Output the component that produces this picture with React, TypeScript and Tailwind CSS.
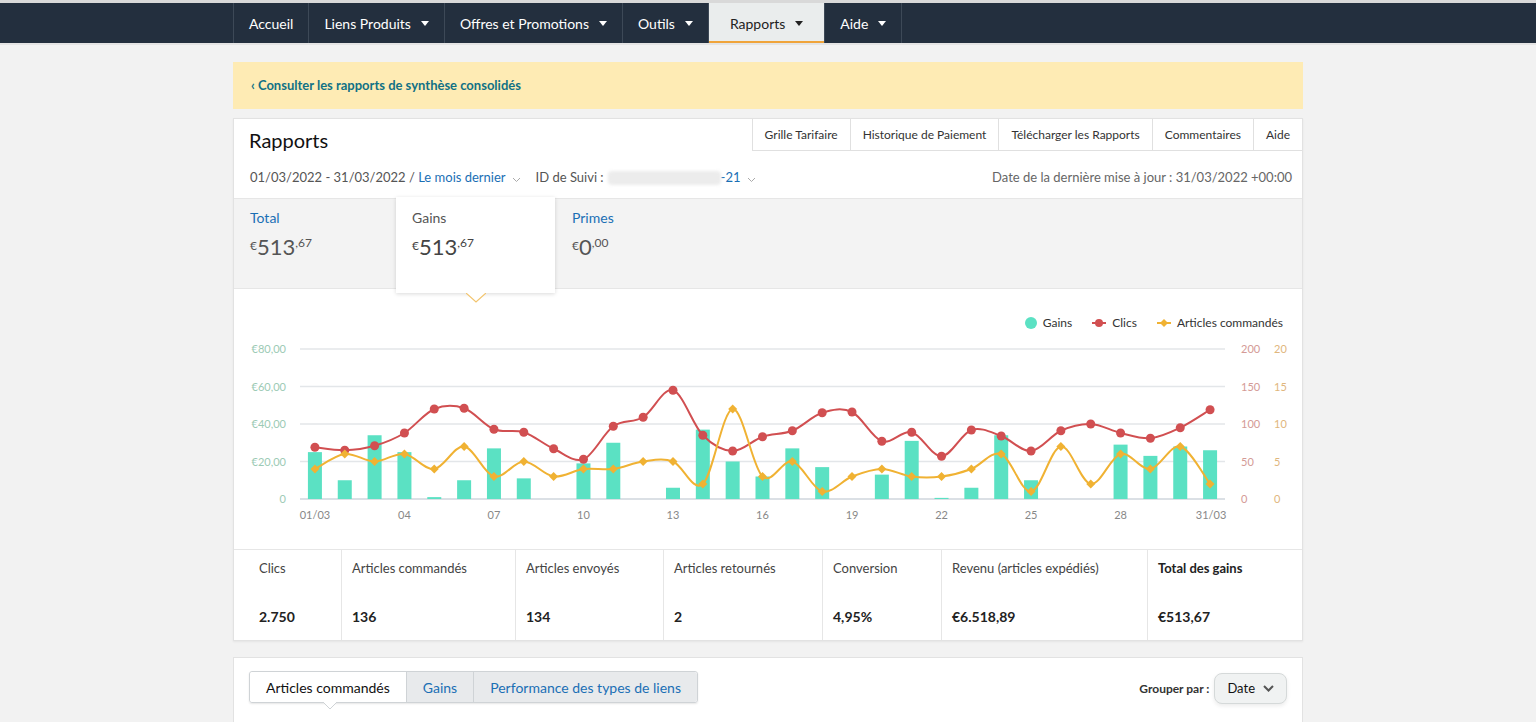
import React from "react";

const FONT = { fontFamily: "Lato, 'Liberation Sans', sans-serif" };

const gains = [25, 10, 34, 25, 1, 10, 27, 11, 0, 19, 30, 0, 6, 37, 20, 12, 27, 17, 0, 13, 31, 0.6, 6, 34, 10, 0, 0, 29, 23, 28, 26];
const clics = [69, 65, 71, 88, 120, 121, 93, 89, 67, 53, 97, 109, 145, 85, 64, 83, 91, 115, 116, 77, 89, 57, 92, 84, 64, 91, 100, 88, 81, 95, 119];
const articles = [4, 6, 5, 6, 4, 7, 3, 5, 3, 4, 4, 5, 5, 2, 12, 3, 5, 1, 3, 4, 3, 3, 4, 6, 1, 7, 2, 6, 4, 7, 2];

// plot geometry (relative to the chart svg)
const X0 = 66;
const X1 = 991;
const TOP = 60;
const BASE = 210;
const STEP = (X1 - X0) / 31;
const px = (i: number) => X0 + STEP * (i + 0.5);

function smooth(pts: [number, number][]) {
  let d = `M${pts[0][0]},${pts[0][1]}`;
  for (let i = 0; i < pts.length - 1; i++) {
    const p0 = pts[i - 1] || pts[i];
    const p1 = pts[i];
    const p2 = pts[i + 1];
    const p3 = pts[i + 2] || p2;
    const c1x = p1[0] + (p2[0] - p0[0]) / 6;
    const c1y = p1[1] + (p2[1] - p0[1]) / 6;
    const c2x = p2[0] - (p3[0] - p1[0]) / 6;
    const c2y = p2[1] - (p3[1] - p1[1]) / 6;
    d += ` C${c1x},${c1y} ${c2x},${c2y} ${p2[0]},${p2[1]}`;
  }
  return d;
}

function Caret() {
  return (
    <svg width="8" height="5" viewBox="0 0 8 5" className="ml-2.5">
      <path d="M0 0h8L4 5z" fill="currentColor" />
    </svg>
  );
}

function SmallChevron() {
  return (
    <svg width="9" height="6" viewBox="0 0 9 6" className="ml-1.5 mt-1">
      <path d="M1 1l3.5 3.5L8 1" fill="none" stroke="#aaa" strokeWidth="1" />
    </svg>
  );
}

function Navbar() {
  const items = [
    { label: "Accueil", caret: false },
    { label: "Liens Produits", caret: true },
    { label: "Offres et Promotions", caret: true },
    { label: "Outils", caret: true },
    { label: "Rapports", caret: true, active: true },
    { label: "Aide", caret: true },
  ];
  return (
    <div className="border-t-[3px] border-[#d9d9d9] bg-[#232f3e] border-b-2 border-b-[#e4e4e4]">
      <div className="flex h-10 pl-[233px]">
        <div className="flex border-l border-[#3d4957]">
          {items.map((it) => (
            <div
              key={it.label}
              className={
                "flex items-center px-[15px] text-[14px] border-r border-[#3d4957] " +
                (it.active
                  ? "bg-[#eaeded] text-[#222] px-[21px] shadow-[inset_0_-2px_0_#f0a43a]"
                  : "text-white")
              }
            >
              {it.label}
              {it.caret && <Caret />}
            </div>
          ))}
        </div>
      </div>
    </div>
  );
}

function Money({ v, c, dark }: { v: string; c: string; dark?: boolean }) {
  return (
    <div className={"flex items-start mt-2 " + (dark ? "text-[#444]" : "text-[#555]")}>
      <span className="text-[12px] leading-none mt-[4px]">€</span>
      <span className="text-[22px] leading-none">{v}</span>
      <span className="text-[12px] leading-none mt-[1px]">{c}</span>
    </div>
  );
}

function Chart() {
  const gridYs = [0, 1, 2, 3, 4].map((k) => TOP + ((BASE - TOP) / 4) * k);
  const leftLabels = ["€80,00", "€60,00", "€40,00", "€20,00", "0"];
  const redLabels = ["200", "150", "100", "50", "0"];
  const orLabels = ["20", "15", "10", "5", "0"];
  const clicPts = clics.map((v, i) => [px(i), BASE - (v / 200) * 150] as [number, number]);
  const artPts = articles.map((v, i) => [px(i), BASE - (v / 20) * 150] as [number, number]);
  const xLabels: [number, string][] = [
    [0, "01/03"], [3, "04"], [6, "07"], [9, "10"], [12, "13"], [15, "16"],
    [18, "19"], [21, "22"], [24, "25"], [27, "28"], [30, "31/03"],
  ];
  return (
    <svg width="1068" height="260" className="block" style={FONT}>
      {gridYs.map((y, k) => (
        <line key={y} x1={X0} x2={X1} y1={y} y2={y} stroke={k === 4 ? "#cfd6dc" : "#e3e6e9"} strokeWidth="1.5" />
      ))}
      {gridYs.map((y, k) => (
        <g key={"l" + k} fontSize="11">
          <text x={52} y={y + 4} textAnchor="end" fill="#9ccab5">{leftLabels[k]}</text>
          <text x={1007} y={y + 4} fill="#d49a96">{redLabels[k]}</text>
          <text x={1040} y={y + 4} fill="#dfb67d">{orLabels[k]}</text>
        </g>
      ))}
      {gains.map((v, i) =>
        v > 0 ? (
          <rect key={i} x={px(i) - 7} y={BASE - v * 1.875} width="14" height={v * 1.875} fill="#5be1c3" />
        ) : null
      )}
      <path d={smooth(clicPts)} fill="none" stroke="#d14f51" strokeWidth="2" />
      {clicPts.map(([x, y], i) => (
        <circle key={i} cx={x} cy={y} r="4.5" fill="#d14f51" />
      ))}
      <path d={smooth(artPts)} fill="none" stroke="#f0b233" strokeWidth="2" />
      {artPts.map(([x, y], i) => (
        <path key={i} d={`M${x} ${y - 4.5}L${x + 4.5} ${y}L${x} ${y + 4.5}L${x - 4.5} ${y}z`} fill="#f0b233" />
      ))}
      {xLabels.map(([i, t]) => (
        <text key={t} x={i === 30 ? px(i) + 1 : px(i)} y={230} fontSize="11" textAnchor="middle" fill="#888">
          {t}
        </text>
      ))}
    </svg>
  );
}

export default function App() {
  const topTabs = ["Grille Tarifaire", "Historique de Paiement", "Télécharger les Rapports", "Commentaires", "Aide"];
  const stats = [
    { label: "Clics", value: "2.750", w: "w-[107px]" },
    { label: "Articles commandés", value: "136", w: "w-[174px]" },
    { label: "Articles envoyés", value: "134", w: "w-[148px]" },
    { label: "Articles retournés", value: "2", w: "w-[159px]" },
    { label: "Conversion", value: "4,95%", w: "w-[119px]" },
    { label: "Revenu (articles expédiés)", value: "€6.518,89", w: "w-[206px]" },
    { label: "Total des gains", value: "€513,67", w: "flex-1", bold: true },
  ];

  return (
    <div className="min-h-screen bg-[#f2f2f2] text-[#333]" style={FONT}>
      <Navbar />

      <div className="w-[1070px] mx-auto pt-[17px] pb-8">
        {/* Banner */}
        <div className="h-[47px] bg-[#feebb4] flex items-center pl-[18px]">
          <span className="text-[13px] font-bold text-[#117185]">‹ Consulter les rapports de synthèse consolidés</span>
        </div>

        {/* Reports card */}
        <div className="mt-[9px] bg-white border border-[#e2e2e2] shadow-[0_1px_2px_rgba(0,0,0,0.06)]">
          <div className="flex justify-between h-[42px]">
            <div className="pl-[15px] pt-[7px] text-[20px] leading-7 text-[#111]">Rapports</div>
            <div className="flex h-8 self-start">
              {topTabs.map((t) => (
                <div key={t} className="flex items-center px-3 text-[12px] text-[#333] border-l border-b border-[#e0e0e0]">
                  {t}
                </div>
              ))}
            </div>
          </div>

          <div className="flex items-center justify-between h-[37px] pb-[4px] pl-[16px] pr-[10px] text-[13px]">
            <div className="flex items-center text-[#555]">
              <span>01/03/2022 - 31/03/2022 /&nbsp;</span>
              <span className="text-[#1a6fb5]">Le mois dernier</span>
              <SmallChevron />
              <span className="ml-[15px]">ID de Suivi :</span>
              <span className="ml-1 w-[113px] h-[14px] bg-[#ececec] blur-[1.5px] rounded-sm" />
              <span className="text-[#1a6fb5]">-21</span>
              <SmallChevron />
            </div>
            <div className="text-[#666]">Date de la dernière mise à jour : 31/03/2022 +00:00</div>
          </div>

          {/* Summary tabs */}
          <div className="h-[91px] bg-[#f3f3f3] border-t border-b border-[#e6e6e6] flex">
            <div className="w-[162px] pl-[16px] pt-[8px]">
              <div className="text-[14px] text-[#1a6fb5]">Total</div>
              <Money v="513" c=",67" />
            </div>
            <div className="relative w-[159px] h-[96px] -mt-[2px] bg-white shadow-[0_1px_4px_rgba(0,0,0,0.15)] pl-[16px] pt-[10px] z-10">
              <div className="text-[14px] text-[#555]">Gains</div>
              <Money v="513" c=",67" dark />
              <svg width="20" height="10" viewBox="0 0 20 10" className="absolute left-[70px] -bottom-[10px]">
                <path d="M0 0L10 9L20 0" fill="white" stroke="#f2c46d" strokeWidth="1.2" />
              </svg>
            </div>
            <div className="w-[160px] pl-[17px] pt-[8px]">
              <div className="text-[14px] text-[#1a6fb5]">Primes</div>
              <Money v="0" c=",00" />
            </div>
          </div>

          {/* Chart */}
          <div className="relative">
            <div className="absolute right-[19px] top-[25px] flex items-center gap-5 text-[12px] text-[#333]">
              <div className="flex items-center gap-1.5">
                <span className="w-3 h-3 rounded-full bg-[#5be1c3]" />
                Gains
              </div>
              <div className="flex items-center gap-1.5">
                <svg width="14" height="10" viewBox="0 0 14 10">
                  <line x1="0" y1="5" x2="14" y2="5" stroke="#d14f51" strokeWidth="2" />
                  <circle cx="7" cy="5" r="4" fill="#d14f51" />
                </svg>
                Clics
              </div>
              <div className="flex items-center gap-1.5">
                <svg width="14" height="10" viewBox="0 0 14 10">
                  <line x1="0" y1="5" x2="14" y2="5" stroke="#f0b233" strokeWidth="2" />
                  <path d="M7 1L11 5L7 9L3 5z" fill="#f0b233" />
                </svg>
                Articles commandés
              </div>
            </div>
            <Chart />
          </div>

          {/* Stats */}
          <div className="flex border-t border-[#e6e6e6] h-[91px]">
            {stats.map((s, i) => (
              <div
                key={s.label}
                className={s.w + " pt-[9px] " + (i === 0 ? "pl-[25px]" : "pl-[10px] border-l border-[#e6e6e6]")}
              >
                <div className={"text-[13px] " + (s.bold ? "font-bold text-[#222]" : "text-[#444]")}>{s.label}</div>
                <div className="mt-[27px] text-[14px] font-bold text-[#222]">{s.value}</div>
              </div>
            ))}
          </div>
        </div>

        {/* Bottom card */}
        <div className="mt-4 bg-white border border-[#e2e2e2] h-[200px] px-[15px] pt-[13px]">
          <div className="flex justify-between items-start">
            <div className="flex h-8 border border-[#cfd3d6] rounded-[3px] shadow-[0_1px_2px_rgba(0,0,0,0.1)] text-[14px]">
              <div className="relative flex items-center px-4 bg-white text-[#111] rounded-l-[3px]">
                Articles commandés
                <svg width="14" height="8" viewBox="0 0 14 8" className="absolute left-[73px] -bottom-[8px]">
                  <path d="M0 0L7 7L14 0" fill="white" stroke="#cfd3d6" strokeWidth="1" />
                </svg>
              </div>
              <div className="flex items-center px-4 bg-[#e8eaec] text-[#1a6fb5] border-l border-[#cfd3d6]">Gains</div>
              <div className="flex items-center px-4 bg-[#e8eaec] text-[#1a6fb5] border-l border-[#cfd3d6] rounded-r-[3px]">
                Performance des types de liens
              </div>
            </div>
            <div className="flex items-center pt-[2px]">
              <span className="text-[12px] font-bold text-[#333] mr-[5px]">Grouper par :</span>
              <div className="flex items-center h-[31px] px-3 bg-[#f0f2f2] border border-[#d5d9d9] rounded-lg shadow-[0_2px_4px_rgba(0,0,0,0.08)] text-[13px] text-[#111]">
                Date
                <svg width="11" height="7" viewBox="0 0 11 7" className="ml-2">
                  <path d="M1 1l4.5 4.5L10 1" fill="none" stroke="#555" strokeWidth="2" />
                </svg>
              </div>
            </div>
          </div>
        </div>
      </div>
    </div>
  );
}
